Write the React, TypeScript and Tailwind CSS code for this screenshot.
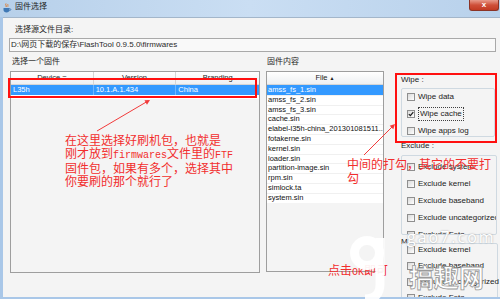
import React from "react";

const files = [
  "amss_fs_1.sin",
  "amss_fs_2.sin",
  "amss_fs_3.sin",
  "cache.sin",
  "elabel-l35h-china_201301081511.sin",
  "fotakerne.sin",
  "kernel.sin",
  "loader.sin",
  "partition-image.sin",
  "rpm.sin",
  "simlock.ta",
  "system.sin",
];

function Check({
  label,
  checked,
  focus,
}: {
  label: string;
  checked?: boolean;
  focus?: boolean;
}) {
  return (
    <div className="flex h-[12px] shrink-0 items-center gap-[3px] pl-[5px] text-[8px] leading-none text-[#1b1b1b]">
      <span className="flex h-[8px] w-[8px] shrink-0 items-center justify-center border border-[#8f8f8f] bg-gradient-to-br from-[#dadada] to-white">
        {checked && (
          <svg width="6" height="6" viewBox="0 0 6 6">
            <path d="M0.8 3.1 L2.4 4.7 L5.3 1.1" fill="none" stroke="#1d1d1d" strokeWidth="1.2" />
          </svg>
        )}
      </span>
      <span
        className={
          focus
            ? "whitespace-nowrap border border-dotted border-[#404040] px-[1px] py-[2px]"
            : "whitespace-nowrap"
        }
      >
        {label}
      </span>
    </div>
  );
}

export default function App() {
  return (
    <div className="relative flex h-[299px] w-[500px] flex-col overflow-hidden bg-[#a9c7e8] font-['Liberation_Sans','Noto_Sans_CJK_SC',sans-serif]">
      {/* title bar */}
      <div className="flex h-[17px] shrink-0 items-start bg-gradient-to-r from-[#b7d0ea] via-[#cadef3] to-[#b8d1eb]">
        <svg className="ml-[2px] mt-[3px]" width="10" height="10" viewBox="0 0 10 10">
          <path d="M4 0.5 C3 2 5 2.5 4 4" fill="none" stroke="#e2741f" strokeWidth="1" />
          <path d="M6 1 C5.2 2.2 6.6 2.6 5.8 3.8" fill="none" stroke="#e2741f" strokeWidth="0.8" />
          <path d="M1.5 5 H7.5 V7 C7.5 8.6 6.2 9.5 4.5 9.5 C2.8 9.5 1.5 8.6 1.5 7 Z" fill="#3f78b5" />
          <path d="M7.5 5.6 C9.3 5.6 9.3 7.6 7.3 7.6" fill="none" stroke="#3f78b5" strokeWidth="0.9" />
        </svg>
        <span className="ml-[3px] mt-[2px] text-[8px] leading-[10px] text-[#1e1e1e]">固件选择</span>
        <div className="ml-auto mr-[1px] flex h-[11px] w-[30px] items-center justify-center rounded-b-[3px] border border-t-0 border-[#8b3325] bg-gradient-to-b from-[#e79a8b] via-[#cf4f39] to-[#c23a22] text-[8px] font-bold leading-none text-white">
          x
        </div>
      </div>

      {/* window body */}
      <div className="mb-[2px] ml-[3px] flex flex-1 flex-col overflow-hidden border-t border-[#a3b6ca] bg-[#f4f4f4]">
        <div className="ml-[12px] mt-[7px] h-[10px] text-[8px] leading-[10px] text-[#1e1e1e]">选择源文件目录:</div>
        <div className="ml-[6px] mt-[3px] flex h-[14px] w-[487px] items-center border border-[#a9a9a9] bg-[#f9f9f9] pl-[1px] text-[8px] text-[#2a2a2a]">
          D:\网页下载的保存\FlashTool 0.9.5.0\firmwares
        </div>

        <div className="mt-[5px] flex pl-[7px]">
          {/* firmware table */}
          <div className="flex w-[250px] flex-col">
            <div className="ml-[2px] h-[10px] text-[8px] leading-[10px] text-[#1e1e1e]">选择一个固件</div>
            <div className="mt-[4px] flex h-[202px] flex-col border border-[#9e9e9e]">
              <div className="grid h-[13px] grid-cols-3 border-b border-[#d5d5d5] bg-gradient-to-b from-white to-[#eef0f2] text-[7.5px] leading-[12px] text-[#222]">
                <div className="border-r border-[#d5d5d5] text-center">Device =</div>
                <div className="border-r border-[#d5d5d5] text-center">Version</div>
                <div className="text-center">Branding</div>
              </div>
              <div className="grid h-[10px] grid-cols-3 bg-[#3399ff] text-[7.5px] leading-[10px] text-white">
                <div className="border-r border-[#6fb6ff] pl-[2px]">L35h</div>
                <div className="border-r border-[#6fb6ff] pl-[2px]">10.1.A.1.434</div>
                <div className="pl-[2px]">China</div>
              </div>
              <div className="h-[4px] bg-white" />
            </div>
          </div>

          {/* file list */}
          <div className="ml-[6px] flex w-[118px] flex-col">
            <div className="ml-[1px] h-[10px] text-[8px] leading-[10px] text-[#1e1e1e]">固件内容</div>
            <div className="mt-[4px] flex h-[201px] flex-col overflow-hidden border border-[#9e9e9e]">
              <div className="h-[13px] shrink-0 border-b border-[#d5d5d5] bg-gradient-to-b from-white to-[#eef0f2] text-center text-[7.5px] leading-[12px] text-[#222]">
                File <span className="text-[5px]">▲</span>
              </div>
              {files.map((f, i) => (
                <div
                  key={f}
                  className={
                    i === 0
                      ? "h-[9.8px] shrink-0 overflow-hidden whitespace-nowrap bg-[#3399ff] pl-[1px] text-[7.5px] leading-[9.8px] text-white"
                      : "h-[9.8px] shrink-0 overflow-hidden whitespace-nowrap border-t border-[#f0f0f0] bg-white pl-[1px] text-[7.5px] leading-[8.8px] text-[#111]"
                  }
                >
                  {f === "elabel-l35h-china_201301081511.sin" ? "elabel-l35h-china_201301081511..." : f}
                </div>
              ))}
            </div>
          </div>

          {/* options */}
          <div className="ml-[11px] flex w-[105px] flex-col pt-[18px] text-[#1b1b1b]">
            <div className="ml-[6px] h-[10px] text-[8px] leading-[10px]">Wipe :</div>
            <div className="ml-[6px] mt-[3px] flex h-[49px] w-[94px] flex-col gap-[5px] rounded-[2px] border border-[#cfd9e1] pt-[2px]">
              <Check label="Wipe data" />
              <Check label="Wipe cache" checked focus />
              <Check label="Wipe apps log" />
            </div>
            <div className="ml-[6px] mt-[4px] h-[10px] text-[8px] leading-[10px]">Exclude :</div>
            <div className="ml-[6px] mt-[4px] flex h-[80px] w-[96px] flex-col gap-[5px] overflow-hidden rounded-[2px] border border-[#cfd9e1] pt-[5px]">
              <Check label="Exclude system" />
              <Check label="Exclude kernel" />
              <Check label="Exclude baseband" />
              <Check label="Exclude uncategorized" />
              <Check label="Exclude Fota" />
            </div>
            <div className="ml-[6px] mt-[2px] h-[6px] w-[7px] overflow-visible text-[8px] leading-[10px]">M</div>
            <div className="ml-[6px] flex h-[70px] w-[97px] flex-col gap-[4px] rounded-[2px] border border-[#cfd9e1]">
              <Check label="Exclude kernel" />
              <Check label="Exclude baseband" />
              <Check label="Exclude uncategorized" />
              <Check label="Exclude Fota" />
            </div>
          </div>
        </div>
      </div>

      {/* annotations */}
      <div className="absolute left-[8px] top-[78px] h-[20px] w-[249px] border-2 border-[#ff1010]" />
      <div className="absolute left-[395px] top-[73px] h-[70px] w-[102px] border-2 border-[#ff1010]" />
      <svg className="pointer-events-none absolute left-0 top-0" width="500" height="299" viewBox="0 0 500 299">
        <line x1="97" y1="131" x2="148" y2="101" stroke="#f23a3a" strokeWidth="1" />
        <polygon points="150,100 146.96,104.66 144.44,100.34" fill="#f23a3a" />
        <line x1="364" y1="155" x2="393" y2="126" stroke="#f23a3a" strokeWidth="1" />
        <polygon points="395,124 393.3,129.3 389.7,125.7" fill="#f23a3a" />
      </svg>

      <div className="absolute left-[65px] top-[134px] font-['Noto_Sans_CJK_SC',sans-serif] text-[12px] leading-[12.5px] text-[#f22e2e]">
        <div>在这里选择好刷机包，也就是</div>
        <div>
          刚才放到<span className="font-['Liberation_Mono',monospace] text-[10px]">firmwares</span>文件里的
          <span className="font-['Liberation_Mono',monospace] text-[10px]">FTF</span>
        </div>
        <div>固件包，如果有多个，选择其中</div>
        <div>你要刷的那个就行了</div>
      </div>
      <div className="absolute left-[347px] top-[157px] font-['Noto_Sans_CJK_SC',sans-serif] text-[12px] leading-[13.5px] text-[#f22e2e]">
        <div>中间的打勾，其它的不要打</div>
        <div>勾</div>
      </div>
      <div className="absolute left-[328px] top-[264px] whitespace-nowrap font-['Noto_Sans_CJK_SC',sans-serif] text-[12px] leading-[12px] text-[#f22e2e]">
        点击<span className="font-['Liberation_Mono',monospace] text-[10px]">OK</span>即可
      </div>

      {/* watermarks */}
      <svg className="pointer-events-none absolute left-0 top-0" width="500" height="299" viewBox="0 0 500 299">
        <circle cx="367" cy="253" r="12.5" fill="none" stroke="#ffffff" strokeOpacity="0.93" strokeWidth="9" />
        <path d="M380 238 L380 284 Q380 299 365 299" fill="none" stroke="#ffffff" strokeOpacity="0.93" strokeWidth="9" />
      </svg>
      <div className="absolute left-[407px] top-[228px] font-['Open_Sans',sans-serif] text-[16px] leading-[18px] tracking-[2px] text-white [text-shadow:0_0_2px_rgba(0,0,0,0.35)]">
        gao7.com
      </div>
      <div className="absolute left-[409px] top-[262px] font-['Noto_Sans_CJK_SC',sans-serif] text-[25px] font-bold leading-[28px] text-white [-webkit-text-stroke:0.8px_#9a9a9a]">
        搞趣网
      </div>
    </div>
  );
}
